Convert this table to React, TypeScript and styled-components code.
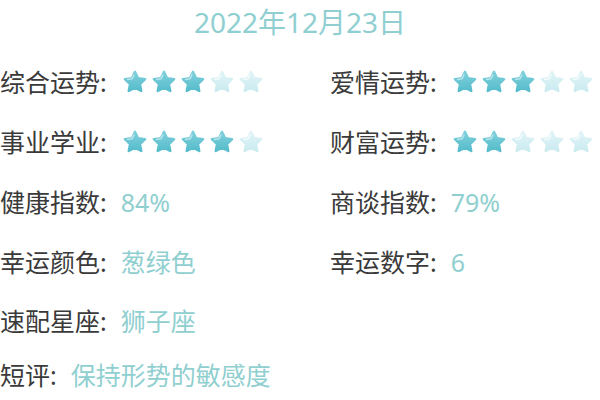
import React from "react";
import styled, { createGlobalStyle } from "styled-components";

const Global = createGlobalStyle`
  html, body { margin: 0; padding: 0; background: #ffffff; }
  body { font-family: "Noto Sans", "Noto Sans CJK SC", sans-serif; }
`;

const Page = styled.div`
  width: 600px;
  height: 400px;
  overflow: hidden;
  background: #fff;
`;

const Title = styled.div`
  height: 52px;
  display: flex;
  align-items: flex-start;
  justify-content: center;
  padding-top: 2px;
  box-sizing: border-box;
  font-size: 28px;
  line-height: 40px;
  color: #8fcfd2;
`;

const Grid = styled.div`
  display: grid;
  grid-template-columns: 330px 1fr;
  grid-template-rows: 60px 60px 60px 60px 58px 50px;
`;

const Cell = styled.div`
  display: flex;
  align-items: center;
  font-size: 25px;
  line-height: 32px;
  white-space: nowrap;
`;

const Label = styled.span`
  color: #3a3a3a;
`;

const Value = styled.span`
  color: #90cfd0;
  margin-left: 14px;
`;

const Stars = styled.span`
  display: inline-flex;
  gap: 3px;
  margin-left: 15px;
`;

const StarSvg = styled.svg`
  width: 26px;
  height: 26px;
  display: block;
`;

const STAR = "M12 2.6l2.85 5.95 6.5.85-4.75 4.5 1.2 6.45L12 17.2l-5.8 3.15 1.2-6.45-4.75-4.5 6.5-.85z";

let uid = 0;
function Star({ on }: { on: boolean }) {
  const id = React.useMemo(() => `g${uid++}`, []);
  return (
    <StarSvg viewBox="0 0 24 24">
      <defs>
        <linearGradient id={id} x1="0" y1="0" x2="0" y2="1">
          <stop offset="0" stopColor={on ? "#7fd0dc" : "#e0f4f7"} />
          <stop offset="1" stopColor={on ? "#56bccb" : "#cbebf0"} />
        </linearGradient>
      </defs>
      <path d={STAR} fill={`url(#${id})`} stroke={`url(#${id})`} strokeWidth={2.2} strokeLinejoin="round" />
      <path
        d="M5.2 9.6 L9.2 9.1 L11 5.6"
        fill="none"
        stroke="#ffffff"
        strokeOpacity={on ? 0.5 : 0.7}
        strokeWidth={1.4}
        strokeLinecap="round"
        strokeLinejoin="round"
      />
    </StarSvg>
  );
}

function Rating({ n }: { n: number }) {
  return (
    <Stars>
      {[0, 1, 2, 3, 4].map((i) => (
        <Star key={i} on={i < n} />
      ))}
    </Stars>
  );
}

export default function App() {
  return (
    <Page>
      <Global />
      <Title>2022年12月23日</Title>
      <Grid>
        <Cell>
          <Label>综合运势:</Label>
          <Rating n={3} />
        </Cell>
        <Cell>
          <Label>爱情运势:</Label>
          <Rating n={3} />
        </Cell>
        <Cell>
          <Label>事业学业:</Label>
          <Rating n={4} />
        </Cell>
        <Cell>
          <Label>财富运势:</Label>
          <Rating n={2} />
        </Cell>
        <Cell>
          <Label>健康指数:</Label>
          <Value>84%</Value>
        </Cell>
        <Cell>
          <Label>商谈指数:</Label>
          <Value>79%</Value>
        </Cell>
        <Cell>
          <Label>幸运颜色:</Label>
          <Value>葱绿色</Value>
        </Cell>
        <Cell>
          <Label>幸运数字:</Label>
          <Value>6</Value>
        </Cell>
        <Cell>
          <Label>速配星座:</Label>
          <Value>狮子座</Value>
        </Cell>
        <Cell />
        <Cell>
          <Label>短评:</Label>
          <Value>保持形势的敏感度</Value>
        </Cell>
        <Cell />
      </Grid>
    </Page>
  );
}
